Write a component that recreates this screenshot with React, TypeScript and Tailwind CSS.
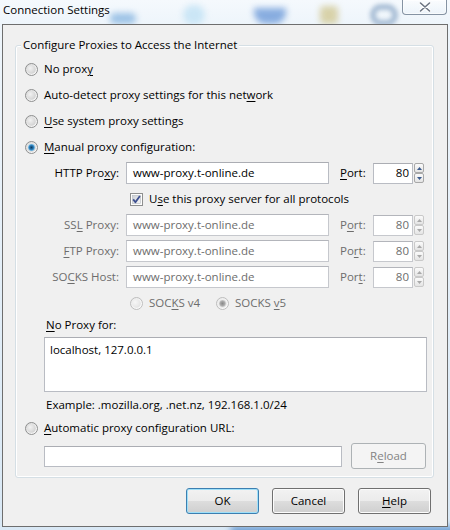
import React from "react";

type RadioProps = { checked?: boolean; disabled?: boolean };

function Radio({ checked = false, disabled = false }: RadioProps) {
  const id = React.useId().replace(/:/g, "");
  return (
    <svg width="13" height="13" viewBox="0 0 13 13" className="shrink-0">
      <defs>
        <linearGradient id={`ring${id}`} x1="0" y1="0" x2="1" y2="1">
          <stop offset="0" stopColor={disabled ? "#e8e8e8" : "#d6d6d6"} />
          <stop offset="1" stopColor="#ffffff" />
        </linearGradient>
        <radialGradient id={`in${id}`} cx="0.35" cy="0.35" r="0.75">
          <stop offset="0" stopColor={disabled ? "#f7f7f7" : "#f2f2f2"} />
          <stop offset="1" stopColor={disabled ? "#e2e2e2" : "#cfcfcf"} />
        </radialGradient>
        <radialGradient id={`dot${id}`} cx="0.5" cy="0.5" r="0.55">
          <stop offset="0" stopColor={disabled ? "#8a8a8a" : "#0d3a5e"} />
          <stop offset="0.55" stopColor={disabled ? "#a6a6a6" : "#2a7bb6"} />
          <stop offset="1" stopColor={disabled ? "#d4d4d4" : "#8ccdf2"} />
        </radialGradient>
      </defs>
      <circle cx="6.5" cy="6.5" r="6" fill={`url(#ring${id})`} stroke={disabled ? "#bdbdbd" : "#8e8f8f"} />
      <circle cx="6.5" cy="6.5" r="4.3" fill={`url(#in${id})`} />
      {checked && <circle cx="6.5" cy="6.5" r="3.4" fill={`url(#dot${id})`} />}
    </svg>
  );
}

function Checkbox() {
  return (
    <svg width="13" height="13" viewBox="0 0 13 13" className="shrink-0">
      <defs>
        <linearGradient id="cbIn" x1="0" y1="0" x2="1" y2="1">
          <stop offset="0" stopColor="#cbcfd5" />
          <stop offset="1" stopColor="#f7f7f7" />
        </linearGradient>
      </defs>
      <rect x="0.5" y="0.5" width="12" height="12" fill="#fdfdfd" stroke="#8e8f8f" />
      <rect x="2.5" y="2.5" width="8" height="8" fill="url(#cbIn)" stroke="#b4b9bf" strokeWidth="0.6" />
      <path d="M3.2 6.4 L5.4 9.2 L9.9 2.9" fill="none" stroke="#3d4f8f" strokeWidth="1.8" strokeLinejoin="round" />
    </svg>
  );
}

function Spinner({ disabled = false }: { disabled?: boolean }) {
  const arrow = disabled ? "#a9a9a9" : "#3b5a8c";
  const half =
    "h-[10px] w-[10px] flex items-center justify-center rounded-[2px] border bg-[linear-gradient(#fbfbfb,#e4e4e4)] " +
    (disabled ? "border-[#c9c9c9]" : "border-[#a8a8a8]");
  return (
    <div className="ml-[1px] flex flex-col">
      <div className={half}>
        <svg width="5" height="3" viewBox="0 0 5 3">
          <path d="M0 3 L2.5 0 L5 3 Z" fill={arrow} />
        </svg>
      </div>
      <div className={half}>
        <svg width="5" height="3" viewBox="0 0 5 3">
          <path d="M0 0 L2.5 3 L5 0 Z" fill={arrow} />
        </svg>
      </div>
    </div>
  );
}

function U({ children }: { children: React.ReactNode }) {
  return <span className="underline underline-offset-[2px] decoration-1">{children}</span>;
}

type ProxyRowProps = {
  label: React.ReactNode;
  port: React.ReactNode;
  disabled?: boolean;
};

function ProxyRow({ label, port, disabled = false }: ProxyRowProps) {
  const text = disabled ? "text-[#6d6d6d]" : "text-black";
  return (
    <div className="flex h-[26px] items-center">
      <div className={`w-[103px] text-right ${text}`}>{label}</div>
      <div
        className={`ml-[7px] flex h-[22px] w-[203px] items-center border bg-white pl-[6px] ${
          disabled ? "border-[#c6c8cd] border-t-[#b3b5bb] text-[#6d6d6d]" : "border-[#b9bcc3] border-t-[#abadb3]"
        }`}
      >
        www-proxy.t-online.de
      </div>
      <div className={`ml-[11px] w-[33px] ${text}`}>{port}</div>
      <div
        className={`flex h-[21px] w-[40px] items-center justify-end border bg-white pr-[3px] ${
          disabled ? "border-[#c6c8cd] border-t-[#b3b5bb] text-[#6d6d6d]" : "border-[#b9bcc3] border-t-[#abadb3]"
        }`}
      >
        80
      </div>
      <Spinner disabled={disabled} />
    </div>
  );
}

function RadioRow({ children, checked }: { children: React.ReactNode; checked?: boolean }) {
  return (
    <div className="flex h-[26px] items-center pl-[9px]">
      <Radio checked={checked} />
      <span className="ml-[6px]">{children}</span>
    </div>
  );
}

const btn =
  "flex h-[26px] w-[73px] items-center justify-center rounded-[3px] border bg-[linear-gradient(#f2f2f2_0%,#ebebeb_50%,#dddddd_50%,#cfcfcf_100%)]";

export default function App() {
  return (
    <div className="relative h-[530px] w-[450px] overflow-hidden bg-[linear-gradient(#f5f9fd_0px,#eef5fb_24px,#d9e8f5_100%)] font-['Open_Sans',sans-serif] text-[11.5px] leading-[16px] text-black">
      {/* blurred toolbar icons seen through the glass frame */}
      <div className="absolute left-[110px] top-[13px] h-[11px] w-[26px] rounded-[5px] bg-[#9dc3e6] blur-[3px]" />
      <div className="absolute left-[183px] top-[5px] h-[20px] w-[22px] rounded-full bg-[#cbe6f6] blur-[3px]" />
      <div className="absolute left-[254px] top-[8px] h-[16px] w-[32px] rounded-b-[12px] bg-[#88ade0] blur-[3px]" />
      <div className="absolute left-[320px] top-[6px] h-[18px] w-[18px] rounded-[4px] bg-[#d8d2aa] blur-[3px]" />
      <div className="absolute left-[370px] top-[4px] h-[22px] w-[28px] rounded-full border-[6px] border-[#aabfd6] blur-[2px]" />
      <div className="absolute bottom-[-5px] left-[230px] h-[9px] w-[230px] rounded-full bg-[#6f9fd4] blur-[3px]" />

      {/* title bar */}
      <div className="relative h-[24px] pl-[3px] pt-[2px]">
        <span className="relative">Connection Settings</span>
        <div className="absolute right-[3px] top-0 flex h-[15px] w-[45px] items-center justify-center rounded-b-[4px] border border-t-0 border-[#8593a3] bg-[linear-gradient(rgba(255,255,255,0.55),rgba(235,243,250,0.75))] shadow-[inset_0_0_0_1px_rgba(255,255,255,0.6)]">
          <svg width="12" height="10" viewBox="0 0 12 10">
            <path d="M1.5 1 L10.5 9 M10.5 1 L1.5 9" stroke="#ffffff" strokeWidth="3.6" strokeLinecap="round" />
            <path d="M1.5 1 L10.5 9 M10.5 1 L1.5 9" stroke="#6b7482" strokeWidth="1.6" strokeLinecap="round" />
          </svg>
        </div>
      </div>

      {/* client area */}
      <div className="relative mx-[2px] border border-[#6e6e6e] bg-[#f0f0f0] pb-[12px] pt-[20px]">
        <div className="relative ml-[12px] mr-[13px] rounded-[3px] border border-[#d5dfe5] pb-[6px] pt-[10px] shadow-[inset_0_0_0_1px_#ffffff]">
          <div className="absolute left-[5px] top-[-9px] bg-[#f0f0f0] px-[2px]">
            Configure Proxies to Access the Internet
          </div>

          <RadioRow>
            No prox<U>y</U>
          </RadioRow>
          <RadioRow>
            Auto-detect proxy settings for this net<U>w</U>ork
          </RadioRow>
          <RadioRow>
            <U>U</U>se system proxy settings
          </RadioRow>
          <RadioRow checked>
            <U>M</U>anual proxy configuration:
          </RadioRow>

          <ProxyRow
            label={
              <>
                HTTP Pro<U>x</U>y:
              </>
            }
            port={
              <>
                <U>P</U>ort:
              </>
            }
          />

          <div className="flex h-[26px] items-center pl-[114px]">
            <Checkbox />
            <span className="ml-[6px]">
              U<U>s</U>e this proxy server for all protocols
            </span>
          </div>

          <ProxyRow
            disabled
            label={
              <>
                SS<U>L</U> Proxy:
              </>
            }
            port={
              <>
                P<U>o</U>rt:
              </>
            }
          />
          <ProxyRow
            disabled
            label={
              <>
                <U>F</U>TP Proxy:
              </>
            }
            port={
              <>
                Po<U>r</U>t:
              </>
            }
          />
          <ProxyRow
            disabled
            label={
              <>
                SO<U>C</U>KS Host:
              </>
            }
            port={
              <>
                Por<U>t</U>:
              </>
            }
          />

          <div className="flex h-[26px] items-center pl-[114px] text-[#6d6d6d]">
            <div className="flex w-[86px] items-center">
              <Radio disabled />
              <span className="ml-[6px]">
                SOC<U>K</U>S v4
              </span>
            </div>
            <Radio disabled checked />
            <span className="ml-[6px]">
              SOCKS <U>v</U>5
            </span>
          </div>

          <div className="flex h-[18px] items-center pl-[30px]">
            <span>
              <U>N</U>o Proxy for:
            </span>
          </div>
          <div className="ml-[28px] mt-[3px] h-[55px] w-[383px] border border-[#b9bcc3] border-t-[#abadb3] bg-white pl-[5px] pt-[4px]">
            localhost, 127.0.0.1
          </div>

          <div className="mt-[3px] flex h-[20px] items-center pl-[30px]">
            Example: .mozilla.org, .net.nz, 192.168.1.0/24
          </div>

          <RadioRow>
            <U>A</U>utomatic proxy configuration URL:
          </RadioRow>

          <div className="flex h-[30px] items-center pl-[28px]">
            <div className="h-[21px] w-[298px] border border-[#b9bcc3] border-t-[#abadb3] bg-white" />
            <div className="ml-[9px] flex h-[26px] w-[75px] items-center justify-center rounded-[3px] border border-[#adb2b5] bg-[#f4f4f4] text-[#838383]">
              R<U>e</U>load
            </div>
          </div>
        </div>

        <div className="mt-[10px] flex justify-end gap-[13px] pr-[16px]">
          <div className={`${btn} border-[#3c7fb1] shadow-[inset_0_0_0_1px_#9fe0f9]`}>OK</div>
          <div className={`${btn} border-[#707070] shadow-[inset_0_0_0_1px_#fcfcfc]`}>Cancel</div>
          <div className={`${btn} border-[#707070] shadow-[inset_0_0_0_1px_#fcfcfc]`}>
            <span>
              <U>H</U>elp
            </span>
          </div>
        </div>
      </div>
    </div>
  );
}
